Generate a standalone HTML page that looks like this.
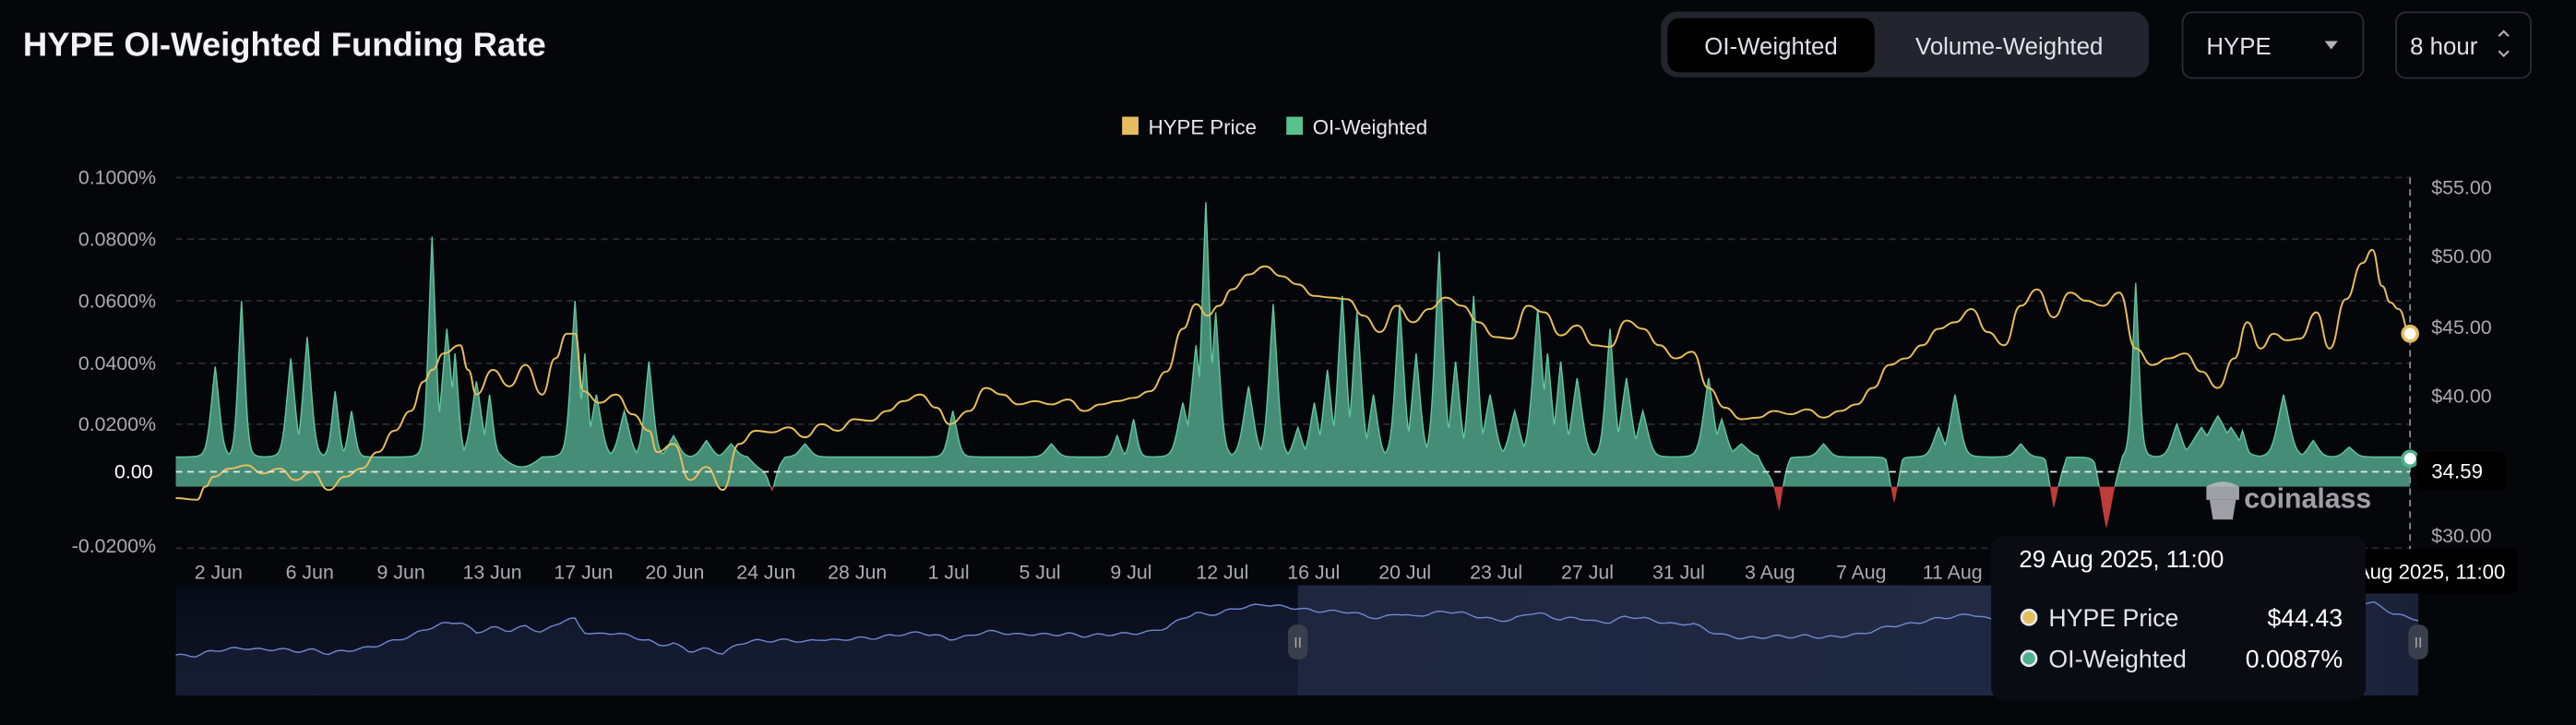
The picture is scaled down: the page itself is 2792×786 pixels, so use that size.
<!DOCTYPE html>
<html><head><meta charset="utf-8"><style>
html,body{margin:0;padding:0;background:#05060a;width:2792px;height:786px;overflow:hidden}
svg{display:block}
text{font-family:"Liberation Sans","DejaVu Sans",sans-serif}
</style></head><body>
<svg id="s" width="2792" height="786" viewBox="0 0 1568 441" preserveAspectRatio="none" xmlns="http://www.w3.org/2000/svg">
<defs>
<clipPath id="above"><rect x="100" y="0" width="1380" height="296"/></clipPath>
<clipPath id="below"><rect x="100" y="296" width="1380" height="100"/></clipPath>
<linearGradient id="nav" x1="0" x2="1" y1="0" y2="0"><stop offset="0" stop-color="#1f2740"/><stop offset="0.8" stop-color="#232b45"/><stop offset="1" stop-color="#1a2035"/></linearGradient>
<linearGradient id="navbg" x1="0" x2="0" y1="0" y2="1"><stop offset="0" stop-color="#070b18"/><stop offset="1" stop-color="#111628"/></linearGradient>
</defs>
<rect width="1568" height="441" fill="#05060a"/>
<text x="14" y="34" font-size="20.5" font-weight="bold" fill="#f2f3f6">HYPE OI-Weighted Funding Rate</text>
<rect x="1011" y="7" width="297" height="40" rx="10" fill="#22252e"/>
<rect x="1015" y="11" width="126" height="33" rx="7" fill="#000"/>
<text x="1078" y="33" font-size="14.5" fill="#dfe2ea" text-anchor="middle">OI-Weighted</text>
<text x="1223" y="33" font-size="14.5" fill="#dfe2ea" text-anchor="middle">Volume-Weighted</text>
<rect x="1328.5" y="7.5" width="110" height="40" rx="6" fill="none" stroke="#2a2d36"/>
<text x="1343" y="33" font-size="14.5" fill="#dfe2ea">HYPE</text>
<path d="M1415 25 L1423 25 L1419 30Z" fill="#b0b3bb"/>
<rect x="1458.5" y="7.5" width="82" height="40" rx="6" fill="none" stroke="#2a2d36"/>
<text x="1467" y="33" font-size="14.5" fill="#dfe2ea">8 hour</text>
<path d="M1521 22 L1524 19 L1527 22 M1521 31 L1524 34 L1527 31" stroke="#b0b3bb" fill="none" stroke-width="1.2"/>
<rect x="683" y="71" width="10" height="11" fill="#e6bd5e"/>
<text x="699" y="81.5" font-size="12.5" fill="#e8e9ee">HYPE Price</text>
<rect x="783" y="71" width="10" height="11" fill="#58c18e"/>
<text x="799" y="81.5" font-size="12.5" fill="#e8e9ee">OI-Weighted</text>
<g id="grid" stroke="#2b2d34" stroke-dasharray="4 3" stroke-width="1"></g>
<g font-size="12" fill="#a8abb3" text-anchor="end">
<text x="95" y="112">0.1000%</text><text x="95" y="149.5">0.0800%</text><text x="95" y="187">0.0600%</text><text x="95" y="225">0.0400%</text><text x="95" y="262">0.0200%</text><text x="93" y="291" fill="#fff">0.00</text><text x="95" y="336">-0.0200%</text>
</g>
<g font-size="12" fill="#a8abb3">
<text x="1480" y="118">$55.00</text><text x="1480" y="160">$50.00</text><text x="1480" y="203">$45.00</text><text x="1480" y="245">$40.00</text><text x="1480" y="330">$30.00</text>
</g>
<g id="series"></g>
<line x1="1467" y1="108" x2="1467" y2="334" stroke="#8a8d95" stroke-dasharray="4 3"/>
<line x1="107" y1="287" x2="1467" y2="287" stroke="#e6e6e6" stroke-dasharray="4 3"/>
<g fill="#b9bcc3" opacity="0.85"><path d="M1343 296 q10 -6 20 0 v8 h-20z"/><path d="M1345 304 h16 l-2 12 h-12z"/><text x="1366" y="309" font-size="17" font-weight="bold" fill="#b9bcc3">coinalass</text></g>
<circle cx="1467" cy="203" r="4.5" fill="#fff" stroke="#e6bd5e" stroke-width="2"/>
<circle cx="1467" cy="279" r="4.5" fill="#fff" stroke="#4fb08d" stroke-width="2"/>
<rect x="1471" y="275" width="54" height="23" rx="3" fill="#000"/>
<text x="1480" y="291" font-size="12.5" fill="#fff">34.59</text>
<g id="xl" font-size="12" fill="#a8abb3" text-anchor="middle"></g>
<rect x="107" y="356" width="1365" height="67" fill="url(#navbg)"/>
<rect x="790" y="356" width="682" height="67" fill="url(#nav)"/>
<g id="navs"></g>
<rect x="784" y="380" width="12" height="21" rx="5" fill="#3a3f4e"/>
<text x="790" y="394" font-size="9" fill="#aaa" text-anchor="middle">II</text>
<rect x="1466" y="380" width="12" height="21" rx="5" fill="#3a3f4e"/>
<text x="1472" y="394" font-size="9" fill="#aaa" text-anchor="middle">II</text>
<rect x="1420" y="334" width="112" height="27" rx="3" fill="#000"/>
<text x="1525" y="352" font-size="12.5" fill="#fff" text-anchor="end">29 Aug 2025, 11:00</text>
<rect x="1212" y="326" width="228" height="100" rx="8" fill="#0a0c13"/>
<text x="1229" y="345" font-size="14.5" fill="#fff">29 Aug 2025, 11:00</text>
<circle cx="1235" cy="375.5" r="4.5" fill="#e6bd5e" stroke="#e8e8ee" stroke-width="1.5"/>
<text x="1247" y="381" font-size="15" fill="#e2e4ea">HYPE Price</text>
<text x="1426" y="381" font-size="15" fill="#fff" text-anchor="end">$44.43</text>
<circle cx="1235" cy="400.5" r="4.5" fill="#4fb08d" stroke="#e8e8ee" stroke-width="1.5"/>
<text x="1247" y="406" font-size="15" fill="#e2e4ea">OI-Weighted</text>
<text x="1426" y="406" font-size="15" fill="#fff" text-anchor="end">0.0087%</text>
</svg>
<script>
var NS="http://www.w3.org/2000/svg";
function el(p,t,a){var e=document.createElementNS(NS,t);for(var k in a)e.setAttribute(k,a[k]);p.appendChild(e);return e;}
var g=document.getElementById('grid');
[108,145.5,183,221,258,333.5].forEach(function(y){el(g,'line',{x1:107,x2:1467,y1:y,y2:y});});
var xl=document.getElementById('xl');
var labs=["2 Jun","6 Jun","9 Jun","13 Jun","17 Jun","20 Jun","24 Jun","28 Jun","1 Jul","5 Jul","9 Jul","12 Jul","16 Jul","20 Jul","23 Jul","27 Jul","31 Jul","3 Aug","7 Aug","11 Aug"];
labs.forEach(function(l,i){var t=el(xl,'text',{x:133+i*55.55,y:352});t.textContent=l;});
var sp=[[131,55,2.5],[147,95,2],[177,60,2.5],[187,73,2.5],[204,40,2],[214,28,2],[263,134,2.2],[272,78,3],[277,63,2],[290,46,3],[298,38,2],[350,95,2.5],[356,63,2],[363,38,3],[380,28,3],[395,58,2.5],[410,13,3],[430,10,3],[445,8,3],[470,-14,2],[490,8,3],[580,28,2.5],[640,8,3],[680,13,2],[690,23,2],[720,33,3],[728,68,3],[734,155,2.5],[740,88,2.5],[760,43,3],[775,93,2.5],[790,18,2.5],[800,33,2.5],[808,53,2.5],[817,98,2.5],[826,88,2.5],[836,38,2.5],[852,93,2.5],[862,63,2.5],[876,125,2.5],[886,58,2.5],[897,98,2.5],[907,38,3],[922,28,3],[936,90,3],[942,63,2.5],[950,58,2.5],[960,48,3],[980,78,2.5],[990,48,3],[1000,28,3],[1040,48,3],[1048,23,3],[1060,8,4],[1083,-22,2],[1110,8,3],[1153,-18,2],[1180,18,3],[1190,38,3],[1230,8,3],[1250,-20,2],[1282,-30,3],[1300,106,2],[1325,20,3],[1340,18,5],[1350,25,6],[1358,18,5],[1365,16,2],[1390,38,3.5],[1408,10,3],[1430,6,3]];
var dips=[[305,330,6],[455,478,8],[1070,1090,12],[1148,1158,10],[1245,1258,12],[1275,1292,14]];
function fy(x){var y=278;
 for(var i=0;i<dips.length;i++){var d=dips[i];if(x>d[0]&&x<d[1])y+=d[2]*Math.sin(Math.PI*(x-d[0])/(d[1]-d[0]));}
 var mx=0;
 for(var i=0;i<sp.length;i++){var s=sp[i];var w=s[2]*1.6;var z=(x-s[0])/w;var e=Math.exp(-Math.abs(z)*1.4);var c=s[1]*(0.55*Math.exp(-z*z)+0.45*e);if(s[1]<0)y-=c;else if(c>mx)mx=c;}
 return y-mx;}
var ser=document.getElementById('series');
var pts=[];for(var x=107;x<=1467;x+=0.5)pts.push([x,fy(x)]);
var line="M"+pts.map(function(p){return p[0].toFixed(1)+" "+p[1].toFixed(1);}).join(" L");
var area=line+" L1467 296 L107 296 Z";
el(ser,'path',{d:area,fill:'#468d77','clip-path':'url(#above)'});
el(ser,'path',{d:area,fill:'#c23b3b','clip-path':'url(#below)'});
el(ser,'path',{d:line,fill:'none',stroke:'#5fc79e','stroke-width':'0.8','clip-path':'url(#above)'});
var pp=[[107,303],[120,304],[125,296],[130,290],[140,285],[150,283],[160,288],[170,285],[180,292],[190,287],[200,298],[210,290],[220,285],[230,275],[240,262],[250,250],[258,232],[263,225],[270,215],[280,210],[285,225],[290,240],[300,225],[310,235],[320,222],[330,240],[338,218],[345,203],[350,203],[355,238],[365,245],[375,240],[385,252],[395,262],[400,275],[410,270],[420,292],[430,284],[440,298],[450,270],[460,262],[470,263],[480,260],[490,266],[500,258],[510,262],[520,255],[530,256],[540,250],[550,244],[560,240],[570,248],[578,258],[590,250],[600,236],[610,240],[620,246],[630,244],[640,246],[650,243],[660,250],[670,246],[680,244],[690,242],[700,238],[710,226],[720,200],[728,185],[735,192],[742,186],[750,176],[760,167],[770,162],[780,168],[790,173],[800,180],[810,181],[820,182],[830,192],[840,202],[850,186],[860,196],[870,188],[880,181],[890,186],[900,196],[910,205],[920,206],[930,186],[940,190],[950,204],[960,198],[970,210],[980,211],[990,195],[1000,200],[1010,210],[1020,218],[1030,214],[1040,236],[1050,248],[1060,255],[1070,254],[1080,250],[1090,252],[1100,249],[1110,254],[1120,250],[1130,246],[1140,236],[1150,222],[1160,218],[1170,210],[1180,200],[1190,196],[1200,188],[1210,202],[1220,210],[1230,186],[1240,176],[1250,193],[1260,178],[1270,183],[1280,186],[1290,178],[1300,212],[1310,222],[1320,218],[1330,215],[1340,226],[1350,236],[1360,218],[1368,196],[1376,212],[1384,203],[1392,207],[1400,206],[1410,190],[1418,212],[1428,182],[1438,160],[1444,152],[1450,174],[1455,184],[1460,188],[1467,203]];
function smooth(a){var d="M"+a[0][0]+" "+a[0][1];for(var i=1;i<a.length;i++){var p0=a[i-1],p1=a[i],mx=(p0[0]+p1[0])/2;d+=" C"+mx+" "+p0[1]+" "+mx+" "+p1[1]+" "+p1[0]+" "+p1[1];}return d;}
el(ser,'path',{d:smooth(pp),fill:'none',stroke:'#e9be5a','stroke-width':'1.1'});
var nv=document.getElementById('navs');var np=[];
for(var x=107;x<=1472;x+=3){var idx=0;while(idx<pp.length-1&&pp[idx+1][0]<x)idx++;var a=pp[idx],b=pp[Math.min(idx+1,pp.length-1)];var t=b[0]==a[0]?0:(x-a[0])/(b[0]-a[0]);var py=a[1]+(b[1]-a[1])*Math.max(0,Math.min(1,t));var y=365+(py-150)*0.22+Math.sin(x*1.7)*0.8;np.push([x,y]);}
var nl="M"+np.map(function(p){return p[0]+" "+p[1].toFixed(1);}).join(" L");
el(nv,'path',{d:nl+" L1472 423 L107 423Z",fill:'#1c2540',opacity:'0.45'});
el(nv,'path',{d:nl,fill:'none',stroke:'#6f86d0','stroke-width':'0.8'});
</script>
</body></html>
